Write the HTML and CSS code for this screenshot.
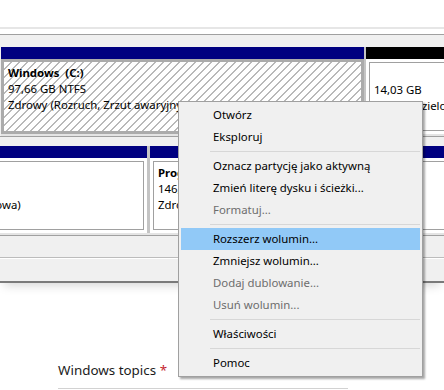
FILE: index.html
```html
<!DOCTYPE html>
<html lang="pl">
<head>
  <meta charset="UTF-8" />
  <title>Zarządzanie dyskami</title>
  <link rel="stylesheet" href="styles.css">
</head>
<body>
  <div class="dm">
    <div class="dm-top"></div>

    <div class="disk disk-0">
      <div class="parts">
        <div class="part part-c selected">
          <div class="part-bar navy"></div>
          <div class="part-body">
            <div class="part-box">
              <b>Windows&nbsp; (C:)</b><br>
              97,66 GB NTFS<br>
              Zdrowy (Rozruch, Zrzut awaryjny, Partycja podstawowa)
            </div>
          </div>
        </div>
        <div class="part part-free">
          <div class="part-bar black"></div>
          <div class="part-body">
            <div class="part-box">
              <br>
              14,03 GB<br>
              Nieprzydzielone
            </div>
          </div>
        </div>
      </div>
    </div>

    <div class="disk disk-1">
      <div class="parts">
        <div class="part part-rec">
          <div class="part-bar navy"></div>
          <div class="part-body">
            <div class="part-box">
              <b>Odzyskiwanie</b><br>
              450 MB NTFS<br>
              Zdrowy (Partycja podstawowa)
            </div>
          </div>
        </div>
        <div class="part part-prog">
          <div class="part-bar navy"></div>
          <div class="part-body">
            <div class="part-box">
              <b>Programy (D:)</b><br>
              146,48 GB NTFS<br>
              Zdrowy (Partycja podstawowa)
            </div>
          </div>
        </div>
      </div>
    </div>

    <div class="dm-band"></div>
    <div class="dm-band last"></div>
  </div>

  <div class="form">
    <label class="field-label">Windows topics <span class="req">*</span></label>
    <div class="field-line"></div>
  </div>

  <ul class="menu">
    <li>Otwórz</li>
    <li>Eksploruj</li>
    <li class="sep"></li>
    <li>Oznacz partycję jako aktywną</li>
    <li>Zmień literę dysku i ścieżki...</li>
    <li class="off">Formatuj...</li>
    <li class="sep"></li>
    <li class="hot">Rozszerz wolumin...</li>
    <li>Zmniejsz wolumin...</li>
    <li class="off">Dodaj dublowanie...</li>
    <li class="off">Usuń wolumin...</li>
    <li class="sep"></li>
    <li>Właściwości</li>
    <li class="sep"></li>
    <li>Pomoc</li>
  </ul>
</body>
</html>
```

FILE: styles.css
```css
body {
  margin: 0;
  width: 444px;
  height: 390px;
  overflow: hidden;
  background: white;
  font-family: "Noto Sans", sans-serif;
  font-size: 11.4px;
  color: #000;
  position: relative;
}

/* disk management view */
.dm {
  padding-top: 27px;
  background: white;
  box-shadow: 0 6px 10px -4px rgba(0, 0, 0, 0.18);
  border-bottom: 2px solid #7a7a7a;
}
.dm-top {
  height: 2px;
  background: #e6e6e6;
  margin-bottom: 5px;
}
.disk {
  border-top: 1px solid #a0a0a0;
  background: #f0f0f0;
  padding-top: 12px;
}
.disk-1 {
  padding-top: 9px;
}
.parts {
  display: flex;
  gap: 2px;
  background: #c4c4c4;
  overflow: hidden;
  border-bottom: 2px solid #e4e4e4;
}
.part {
  flex: none;
}
.part-bar {
  height: 12px;
}
.part-bar.navy { background: #000080; }
.part-bar.black { background: #000; }

.part-body {
  height: 75px;
  box-sizing: border-box;
  padding: 3px;
  background: white;
}
.part-box {
  height: 100%;
  box-sizing: border-box;
  border: 1px solid #a0a0a0;
  padding: 3px 0 0 4px;
  line-height: 16px;
  white-space: nowrap;
  overflow: hidden;
}
.part-box b {
  font-weight: 700;
}

.selected .part-body {
  border: 3px solid #ababab;
  padding: 0;
  background: repeating-linear-gradient(135deg, #fff 0 4.6px, #b9b9b9 4.6px 5.66px);
}
.selected .part-box {
  border: none;
  padding: 3px 0 0 4px;
}

.disk-0 .parts { margin-left: 1px; }
.part-c { width: 363px; }
.part-free { width: 120px; }
.part-rec { width: 297px; margin-left: -150px; }
.part-prog { width: 320px; }
.disk-1 .parts { gap: 3px; }

.dm-band {
  height: 21px;
  background: #f0f0f0;
  border-top: 1px solid #a0a0a0;
}
.dm-band.last {
  height: 23px;
  border-top: 1px solid #bcbcbc;
  box-shadow: inset 0 1px 0 white;
}

/* form below */
.form {
  padding: 77px 0 0 58px;
}
.field-label {
  display: block;
  font-size: 13.4px;
  color: #1b1b1b;
  line-height: 20px;
}
.req {
  color: #c4262e;
}
.field-line {
  margin-top: 8px;
  width: 290px;
  height: 1px;
  background: #d2d2d2;
}

/* context menu */
.menu {
  position: absolute;
  left: 178px;
  top: 101px;
  width: 239px;
  margin: 0;
  padding: 2px 2px;
  list-style: none;
  background: #f0f0f0;
  border: 1px solid #a0a0a0;
  box-shadow: 2px 2px 2px rgba(0, 0, 0, 0.35);
}
.menu li {
  height: 22px;
  line-height: 22px;
  padding-left: 32px;
  white-space: nowrap;
}
.menu li.off {
  color: #6d6d6d;
}
.menu li.hot {
  background: #91c9f7;
}
.menu li.sep {
  height: 7px;
  padding: 0;
  margin-left: 29px;
  position: relative;
}
.menu li.sep::after {
  content: "";
  position: absolute;
  left: 0;
  right: 0;
  top: 3px;
  height: 1px;
  background: #d7d7d7;
}
```
